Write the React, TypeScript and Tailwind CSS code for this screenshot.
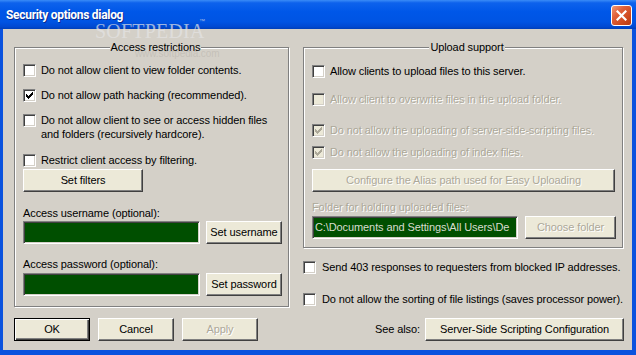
import React from "react";

const CHECK = [
  "......X",
  ".....XX",
  "X...XXX",
  "XX.XXX.",
  "XXXXX..",
  ".XXX...",
  "..X....",
];

function Box({ checked = false, disabled = false }: { checked?: boolean; disabled?: boolean }) {
  const rects: React.ReactNode[] = [];
  CHECK.forEach((row, y) =>
    row.split("").forEach((c, x) => {
      if (c === "X") rects.push(<rect key={`${x}-${y}`} x={x + 2} y={y + 2} width={1} height={1} />);
    })
  );
  return (
    <div
      className={
        "w-[13px] h-[13px] shrink-0 border border-t-[#808080] border-l-[#808080] border-r-white border-b-white shadow-[inset_1px_1px_0_#404040,inset_-1px_-1px_0_#d4d0c8] " +
        (disabled ? "bg-[#ece9d8]" : "bg-white")
      }
    >
      {checked && (
        <svg width="11" height="11" viewBox="0 0 11 11" className="block" fill={disabled ? "#aca899" : "#000"}>
          {rects}
        </svg>
      )}
    </div>
  );
}

function Btn({
  children,
  className = "",
  disabled = false,
  isDefault = false,
}: {
  children: React.ReactNode;
  className?: string;
  disabled?: boolean;
  isDefault?: boolean;
}) {
  const frame = isDefault
    ? "border border-black shadow-[inset_1px_1px_0_#fff,inset_-1px_-1px_0_#404040,inset_-2px_-2px_0_#808080]"
    : "border border-t-white border-l-white border-r-[#404040] border-b-[#404040] shadow-[inset_-1px_-1px_0_#808080]";
  return (
    <div
      className={
        "h-[23px] shrink-0 flex items-center justify-center bg-[#ece9d8] text-[11px] leading-[13px] whitespace-nowrap " +
        frame +
        " " +
        (disabled ? "text-[#aca899] [text-shadow:1px_1px_0_#fff] " : "text-black ") +
        className
      }
    >
      {children}
    </div>
  );
}

function Field({ className = "", children }: { className?: string; children?: React.ReactNode }) {
  return (
    <div
      className={
        "h-[23px] shrink-0 bg-[#004f00] border border-t-[#808080] border-l-[#808080] border-r-white border-b-white shadow-[inset_1px_1px_0_#404040,inset_-1px_-1px_0_#d4d0c8] flex items-center overflow-hidden whitespace-nowrap " +
        className
      }
    >
      {children}
    </div>
  );
}

function Row({
  children,
  checked = false,
  disabled = false,
  className = "",
  gap = "gap-[5px]",
}: {
  children: React.ReactNode;
  checked?: boolean;
  disabled?: boolean;
  className?: string;
  gap?: string;
}) {
  return (
    <div className={"flex items-center h-[13px] " + gap + " " + className}>
      <Box checked={checked} disabled={disabled} />
      <span className={"leading-[13px] whitespace-nowrap " + (disabled ? "text-[#aca899] [text-shadow:1px_1px_0_#fff]" : "")}>
        {children}
      </span>
    </div>
  );
}

const groupCls =
  "border border-[#808080] shadow-[inset_1px_1px_0_#fff,1px_1px_0_#fff] min-w-0";
const legendCls = "mx-auto px-[1px] bg-[#d4d0c8] text-[11px] leading-[13px]";

export default function App() {
  return (
    <div className="w-[636px] h-[355px] bg-[#0a52de] flex flex-col relative overflow-hidden font-['Liberation_Sans',Arial,sans-serif] text-[11px] tracking-[-0.1px] text-black">
      {/* Title bar */}
      <div className="h-[29px] shrink-0 flex items-start bg-[linear-gradient(to_bottom,#3a8cf7_0%,#0d62ec_10%,#0057e8_40%,#0054e3_75%,#0049d2_92%,#003fb8_100%)]">
        <span className="ml-[6px] mt-[8px] text-white font-bold text-[12px] leading-[15px] tracking-[-0.3px] font-['Roboto',Arial,sans-serif] [text-shadow:1px_1px_0_#0b2b8c]">
          Security options dialog
        </span>
        <div className="ml-auto mr-[4px] mt-[5px] w-[21px] h-[21px] rounded-[3px] border border-white bg-[linear-gradient(135deg,#f19a76_0%,#e0603a_35%,#cf4a1e_70%,#b93a12_100%)] flex items-center justify-center">
          <svg width="11" height="11" viewBox="0 0 11 11">
            <path d="M1.5 1.5 L9.5 9.5 M9.5 1.5 L1.5 9.5" stroke="#fff" strokeWidth="2.2" strokeLinecap="square" />
          </svg>
        </div>
      </div>

      {/* Body */}
      <div className="ml-[3px] mr-[4px] mb-[5px] flex-1 bg-[#d4d0c8] flex pl-[11px]">
        {/* Left column */}
        <div className="w-[275px] flex flex-col">
          <fieldset className={groupCls + " mt-[12px] pl-[8px] pb-[10px]"}>
            <legend className={legendCls}>Access restrictions</legend>
            <Row className="mt-[10px]">Do not allow client to view folder contents.</Row>
            <Row className="mt-[12px]" checked>
              Do not allow path hacking (recommended).
            </Row>
            <div className="flex items-start gap-[5px] mt-[11px]">
              <div className="mt-[1px]">
                <Box />
              </div>
              <span className="leading-[14px]">
                Do not allow client to see or access hidden files
                <br />
                and folders (recursively hardcore).
              </span>
            </div>
            <Row className="mt-[13px]">Restrict client access by filtering.</Row>
            <Btn className="mt-[2px] w-[120px]">Set filters</Btn>
            <div className="mt-[15px] leading-[13px]">Access username (optional):</div>
            <div className="mt-[1px] flex gap-[6px]">
              <Field className="w-[177px]" />
              <Btn className="w-[76px]">Set username</Btn>
            </div>
            <div className="mt-[14px] leading-[13px]">Access password (optional):</div>
            <div className="mt-[2px] flex gap-[6px]">
              <Field className="w-[177px]" />
              <Btn className="w-[76px]">Set password</Btn>
            </div>
          </fieldset>
          <div className="mt-[11px] flex gap-[8px]">
            <Btn isDefault className="w-[76px]">
              OK
            </Btn>
            <Btn className="w-[76px]">Cancel</Btn>
            <Btn disabled className="w-[76px]">
              Apply
            </Btn>
          </div>
        </div>

        {/* Right column */}
        <div className="w-[321px] ml-[14px] flex flex-col">
          <fieldset className={groupCls + " w-[320px] mt-[12px] pl-[8px] pb-[8px]"}>
            <legend className={legendCls}>Upload support</legend>
            <Row className="mt-[11px]">Allow clients to upload files to this server.</Row>
            <Row className="mt-[15px]" disabled>
              Allow client to overwrite files in the upload folder.
            </Row>
            <Row className="mt-[18px]" disabled checked>
              Do not allow the uploading of server-side-scripting files.
            </Row>
            <Row className="mt-[9px]" disabled checked>
              Do not allow the uploading of index files.
            </Row>
            <Btn disabled className="mt-[10px] w-[303px]">
              Configure the Alias path used for Easy Uploading
            </Btn>
            <div className="mt-[9px] leading-[13px] text-[#aca899] [text-shadow:1px_1px_0_#fff]">
              Folder for holding uploaded files:
            </div>
            <div className="mt-[2px] flex gap-[7px]">
              <Field className="w-[206px] pl-[2px]">
                <span className="text-[#d8dccf] leading-[13px]">{"C:\\Documents and Settings\\All Users\\De"}</span>
              </Field>
              <Btn disabled className="w-[91px]">
                Choose folder
              </Btn>
            </div>
          </fieldset>
          <Row className="mt-[13px]" gap="gap-[6px]">
            Send 403 responses to requesters from blocked IP addresses.
          </Row>
          <Row className="mt-[19px]" gap="gap-[6px]">
            Do not allow the sorting of file listings (saves processor power).
          </Row>
          <div className="mt-[12px] flex items-center justify-end gap-[5px]">
            <span className="leading-[13px]">See also:</span>
            <Btn className="w-[199px]">Server-Side Scripting Configuration</Btn>
          </div>
        </div>
      </div>

      {/* Softpedia watermark overlay */}
      <span className="absolute left-[95px] top-[21px] text-[20px] leading-[20px] tracking-[0.2px] font-['Liberation_Serif',serif] text-[rgba(228,228,228,0.7)] pointer-events-none">
        SOFTPEDIA
      </span>
      <span className="absolute left-[199px] top-[18px] text-[6px] leading-[7px] font-['Liberation_Sans',sans-serif] text-[rgba(228,228,228,0.7)] pointer-events-none">
        ™
      </span>
      <span className="absolute left-[135px] top-[49px] text-[10px] leading-[10px] font-['Liberation_Sans',sans-serif] text-[rgba(180,176,168,0.5)] pointer-events-none">
        www.softpedia.com
      </span>
    </div>
  );
}
